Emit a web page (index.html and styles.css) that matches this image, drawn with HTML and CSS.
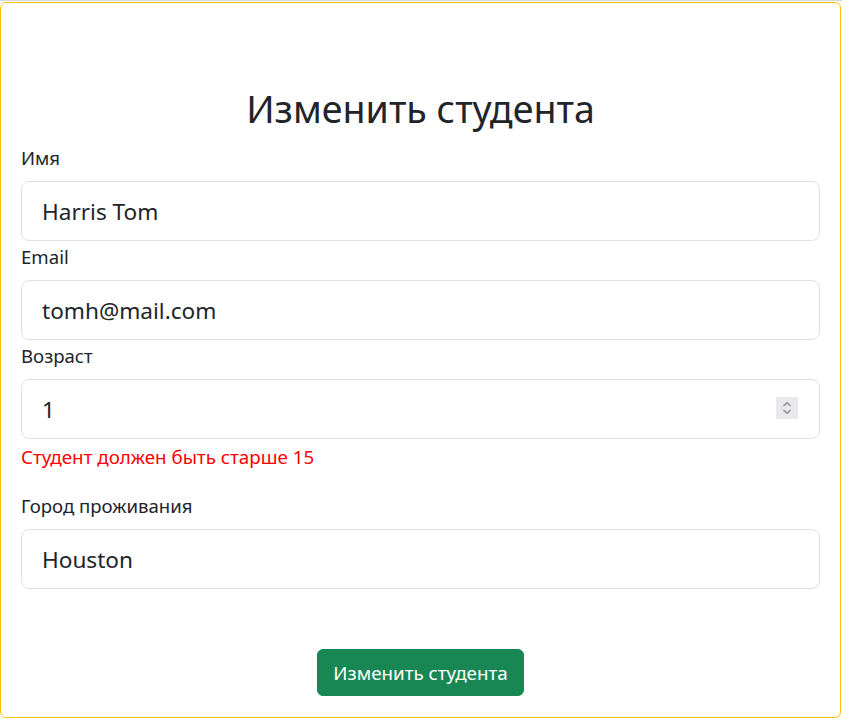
FILE: index.html
```html
<!DOCTYPE html>
<html lang="ru">
<head>
<meta charset="utf-8">
<title>Изменить студента</title>
<link rel="stylesheet" href="styles.css">
</head>
<body>
<div class="topline"></div>
<div class="card">
  <h1 class="title">Изменить студента</h1>
  <form class="form">
    <div class="field">
      <label class="label">Имя</label>
      <input class="control" type="text" value="Harris Tom">
    </div>
    <div class="field">
      <label class="label">Email</label>
      <input class="control" type="text" value="tomh@mail.com">
    </div>
    <div class="field">
      <label class="label">Возраст</label>
      <div class="number-wrap">
        <input class="control" type="text" value="1">
        <span class="spinner">
          <svg width="22" height="22" viewBox="0 0 22 22">
            <path d="M7.5 9 L11 5.8 L14.5 9" fill="none" stroke="#8a8a92" stroke-width="1.5"/>
            <path d="M7.5 13 L11 16.2 L14.5 13" fill="none" stroke="#8a8a92" stroke-width="1.5"/>
          </svg>
        </span>
      </div>
      <div class="error">Студент должен быть старше 15</div>
    </div>
    <div class="field field-gap">
      <label class="label">Город проживания</label>
      <input class="control" type="text" value="Houston">
    </div>
    <div class="actions">
      <button class="btn" type="button">Изменить студента</button>
    </div>
  </form>
</div>
</body>
</html>
```
FILE: styles.css
```css
* { box-sizing: border-box; }
html, body { margin: 0; padding: 0; background: #fff; }
body {
  font-family: "Noto Sans", "Open Sans", sans-serif;
  color: #212529;
  width: 842px;
}
.topline { height: 1px; background: #d9d9d9; }
.card {
  margin-top: 1px;
  width: 841px;
  height: 716px;
  border: 1px solid #ffc107;
  border-radius: 6px;
  padding: 82px 20px 0 20px;
}
.title {
  margin: 0;
  text-align: center;
  font-weight: 400;
  font-size: 37.6px;
  line-height: 48px;
}
.form { margin-top: 13px; }
.field { display: flex; flex-direction: column; }
.label {
  font-size: 18.6px;
  line-height: 24px;
  margin-bottom: 11px;
}
.control {
  display: block;
  width: 100%;
  height: 60px;
  border: 1px solid #dee2e6;
  border-radius: 8px;
  padding: 0 20px;
  font-family: inherit;
  font-size: 22.6px;
  color: #212529;
  background: #fff;
  outline: none;
}
.field + .field .label { margin-top: 4px; }
.number-wrap { position: relative; }
.spinner {
  position: absolute;
  right: 22px;
  top: 18px;
  width: 22px;
  height: 22px;
  background: #e9e9ed;
  display: block;
}
.spinner svg { display: block; }
.error {
  color: #ff0000;
  font-size: 18.8px;
  line-height: 24px;
  margin-top: 6px;
}
.field-gap .label { margin-top: 25px !important; }
.actions {
  display: flex;
  justify-content: center;
  margin-top: 60px;
}
.btn {
  background: #198754;
  color: #fff;
  border: 1px solid #198754;
  border-radius: 6px;
  height: 47px;
  padding: 0 15px;
  font-family: inherit;
  font-size: 18.8px;
  line-height: 24px;
}
```
